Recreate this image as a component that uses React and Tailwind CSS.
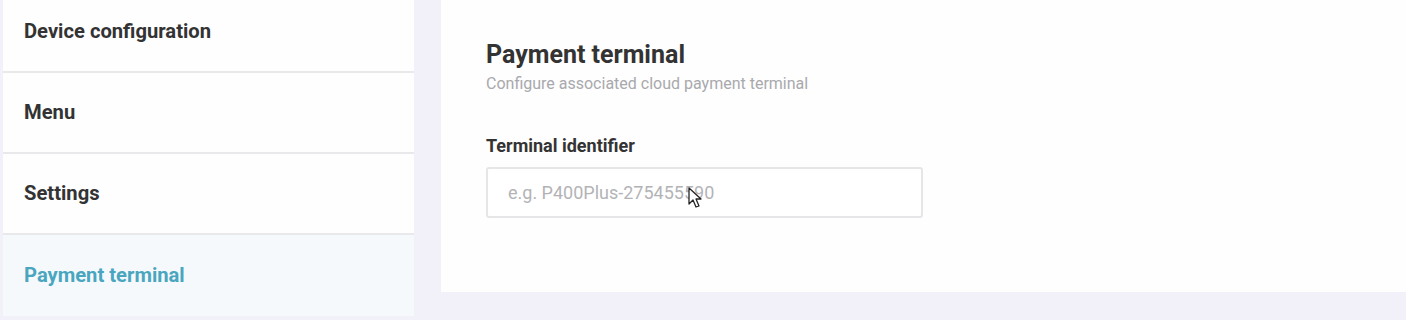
import React from "react";

const items = [
  { label: "Device configuration" },
  { label: "Menu" },
  { label: "Settings" },
  { label: "Payment terminal", active: true },
];

export default function App() {
  return (
    <div
      className="w-[1406px] h-[320px] overflow-hidden bg-[#f2f1fa] flex items-start"
      style={{ fontFamily: "Roboto, 'Liberation Sans', sans-serif" }}
    >
      <div className="ml-[3px] w-[411px] flex flex-col -mt-[8px]">
        {items.map((it, i) => (
          <div
            key={it.label}
            className={
              "h-[81px] flex items-center pl-[21px] text-[20.2px] font-bold " +
              (it.active
                ? "bg-[#f6f9fc] text-[#4aa6bf]"
                : "bg-[#fefeff] text-[#333333] border-b-2 border-[#e9e9ec]")
            }
          >
            {it.label}
          </div>
        ))}
      </div>
      <div className="ml-[27px] flex-1 h-[292px] bg-[#fefefe] pl-[45px] pt-[40px] relative">
        <h1 className="text-[25px] leading-[30px] font-bold text-[#333333]">Payment terminal</h1>
        <p className="text-[16px] leading-[20px] text-[#a9a9ad] mt-[4px]">
          Configure associated cloud payment terminal
        </p>
        <label className="block mt-[41px] text-[18px] leading-[22px] font-bold text-[#333333]">
          Terminal identifier
        </label>
        <div className="mt-[10px] w-[437px] h-[51px] border-2 border-[#e6e6e8] rounded-[3px] bg-white flex items-center pl-[20px] text-[18px] text-[#b3b3b7]">
          e.g. P400Plus-275455590
        </div>
        <svg
          className="absolute left-[247px] top-[187px]"
          width="16"
          height="22"
          viewBox="0 0 16 22"
        >
          <path
            d="M1 1 L1 17 L5 13 L8 20 L11 19 L8 12 L13 12 Z"
            fill="#ffffff"
            stroke="#222222"
            strokeWidth="1.3"
            strokeLinejoin="round"
          />
        </svg>
      </div>
    </div>
  );
}
